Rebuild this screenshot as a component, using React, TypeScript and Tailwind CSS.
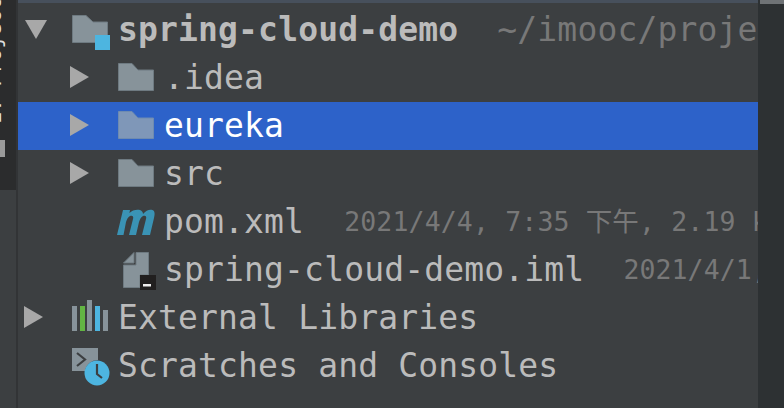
const mono = "font-['DejaVu_Sans_Mono','Liberation_Mono','Noto_Sans_CJK_SC',monospace]";

function Arrow({ open }: { open?: boolean }) {
  return (
    <svg width="24" height="24" viewBox="0 0 24 24" className="shrink-0">
      {open ? <polygon points="1,3 23,3 12,22" fill="#a8a8a8" /> : <polygon points="0,1 19,12 0,23" fill="#a8a8a8" />}
    </svg>
  );
}

function Folder({ selected }: { selected?: boolean }) {
  const fill = selected ? "#7f97b8" : "#87939a";
  const stroke = selected ? "#6e8bb0" : "#6e7a81";
  return (
    <svg width="36" height="28" viewBox="0 0 36 28" className="shrink-0">
      <path d="M.5.5H14L20 7H35.5V27.5H.5Z" fill={fill} stroke={stroke} />
    </svg>
  );
}

function ProjectIcon() {
  return (
    <svg width="38" height="35" viewBox="0 0 38 35" className="mt-[7px] shrink-0">
      <path d="M.5.5H14L21 7H35.5V27.5H.5Z" fill="#87939a" stroke="#6e7a81" />
      <rect x="23" y="20" width="15" height="15" fill="#4db5e0" />
    </svg>
  );
}

function MavenIcon() {
  return (
    <svg width="38" height="26" viewBox="0 0 38 26" className="-ml-px mt-0.5 shrink-0">
      <path d="M0 26L6 1H13L12.4 4C15 1 20 0 23 1 25 2 26 3 26 5 29 1 33 0 35.5 1 38 2 38 5 37 9L33 26H25L29 10C30 7 28 6 26 7 24 8 23 10 22 13L19 26H12L16 10C17 7 15 6 13 7 11 8 10 10 9 13L6.5 26Z" fill="#3a93b5" />
    </svg>
  );
}

function ImlIcon() {
  return (
    <svg width="33" height="38" viewBox="0 0 33 38" className="mt-1 shrink-0">
      <path d="M.5 11L11 .5V11Z" fill="#87939a" stroke="#6e7a81" />
      <path d="M13 .5H25.5V23H17V35.5H.5V13H13Z" fill="#87939a" stroke="#6e7a81" />
      <rect x="17" y="23" width="16" height="15" fill="#211f1f" />
      <rect x="20" y="32" width="8" height="2.5" fill="#eeeeee" />
    </svg>
  );
}

function LibIcon() {
  return (
    <svg width="36" height="31" viewBox="0 0 36 31" className="-mt-[3px] shrink-0">
      <rect x="0" y="6" width="5" height="25" fill="#87939a" />
      <rect x="8" y="6" width="5" height="25" fill="#62b543" />
      <rect x="15" y="0" width="5" height="31" fill="#87939a" />
      <rect x="23" y="6" width="5" height="25" fill="#4db5e0" />
      <rect x="31" y="10" width="5" height="21" fill="#87939a" />
    </svg>
  );
}

function ScratchIcon() {
  return (
    <svg width="38" height="38" viewBox="0 0 38 38" className="mt-1 shrink-0">
      <path d="M0 0H26V12A13 13 0 0 0 13 23H0Z" fill="#87939a" />
      <path d="M5 5L13 11.5L5 18" fill="none" stroke="#3c3f41" strokeWidth="2.2" />
      <circle cx="25" cy="25" r="12.5" fill="#4db5e0" />
      <path d="M25 16V26L30 30" fill="none" stroke="#3c3f41" strokeWidth="2.2" />
    </svg>
  );
}

function Row({
  indent,
  arrow,
  icon,
  selected,
  children,
}: {
  indent: string;
  arrow?: "open" | "closed";
  icon: React.ReactNode;
  selected?: boolean;
  children: React.ReactNode;
}) {
  return (
    <div className={`flex h-12 shrink-0 items-center overflow-hidden whitespace-nowrap pb-0.5 ${indent} ${selected ? "bg-[#2d62c9]" : ""}`}>
      <div className="flex w-[48px] shrink-0 items-center">{arrow && <Arrow open={arrow === "open"} />}</div>
      <div className="flex w-[47px] shrink-0 items-center">{icon}</div>
      {children}
    </div>
  );
}

export default function App() {
  return (
    <div className={`flex h-[408px] w-[784px] overflow-hidden bg-[#3c3f41] ${mono}`}>
      <div className="relative h-[190px] w-4 shrink-0 overflow-hidden bg-[#2b2c2d]">
        <span className="absolute left-[-17px] top-[-2px] rotate-180 text-[21px] leading-[22px] text-[#dddddd] [writing-mode:vertical-rl]">
          1: Project
        </span>
        <div className="absolute left-0 top-[140px] h-[17px] w-[5px] bg-[#9a9a9a]" />
      </div>
      <div className="w-0.5 shrink-0 bg-[#323436]" />
      <div className="flex w-[740px] shrink-0 flex-col">
        <div className="h-[3px] shrink-0 bg-[#47505c]" />
        <div className="flex flex-col pt-[3px] text-[33px] leading-none tracking-[0.15px] text-[#bbbbbb]">
          <Row indent="pl-[6px]" arrow="open" icon={<ProjectIcon />}>
            <span className="-ml-px font-bold">spring-cloud-demo</span>
            <span className="ml-[39px] text-[#787878]">~/imooc/projects</span>
          </Row>
          <Row indent="pl-[52px]" arrow="closed" icon={<Folder />}>
            <span className="-ml-px">.idea</span>
          </Row>
          <Row indent="pl-[52px]" arrow="closed" icon={<Folder selected />} selected>
            <span className="-ml-px text-white">eureka</span>
          </Row>
          <Row indent="pl-[52px]" arrow="closed" icon={<Folder />}>
            <span className="-ml-px">src</span>
          </Row>
          <Row indent="pl-[52px]" icon={<MavenIcon />}>
            <span className="-ml-px">pom.xml</span>
            <span className="ml-10 mt-0.5 text-[26.5px] tracking-[0.15px] text-[#787878]">2021/4/4, 7:35 下午, 2.19 kB</span>
          </Row>
          <Row indent="pl-[52px]" icon={<div className="pl-[5px]"><ImlIcon /></div>}>
            <span className="-ml-px">spring-cloud-demo.iml</span>
            <span className="ml-[39px] mt-0.5 text-[26.5px] tracking-[0.1px] text-[#787878]">2021/4/1, 7:35 下午</span>
          </Row>
          <Row indent="pl-[6px]" arrow="closed" icon={<LibIcon />}>
            <span className="-ml-px">External Libraries</span>
          </Row>
          <Row indent="pl-[6px]" icon={<ScratchIcon />}>
            <span className="-ml-px">Scratches and Consoles</span>
          </Row>
        </div>
      </div>
      <div className="flex w-[26px] shrink-0 flex-col bg-[#2d3133]">
        <div className="ml-0.5 h-1 bg-[#6f7376]" />
      </div>
    </div>
  );
}
